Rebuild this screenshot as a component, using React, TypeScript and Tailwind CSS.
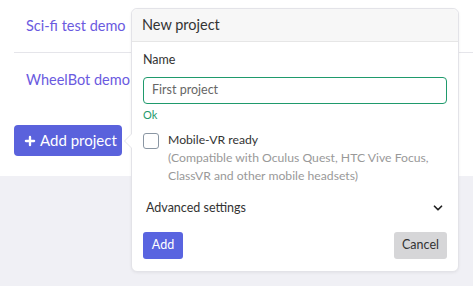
import { ChevronDown, Plus } from "lucide-react";

export default function App() {
  return (
    <div className="relative w-[473px] h-[286px] overflow-hidden bg-[#f0f0f5] font-['Lato',sans-serif]">
      {/* project list card */}
      <div className="bg-white h-[176px] pl-[14px]">
        <div className="h-[53px] flex items-center pl-[12px] border-b border-[#e5e5ea]">
          <a className="text-[14.5px] text-[#6a5ae0] leading-none whitespace-nowrap">Sci-fi test demo</a>
        </div>
        <div className="h-[55px] flex items-center pl-[12px]">
          <a className="text-[14.5px] text-[#6a5ae0] leading-none whitespace-nowrap">WheelBot demo</a>
        </div>
        <div className="pt-[17px]">
          <button className="h-[31px] w-[108px] flex items-center gap-[3px] px-[9px] rounded-[4px] bg-[#5a62dc] text-white text-[15px] whitespace-nowrap">
            <Plus className="w-[14px] h-[14px] shrink-0" strokeWidth={4} />
            Add project
          </button>
        </div>
      </div>

      {/* new project popover */}
      <div className="absolute left-[131px] top-[8px] w-[328px] h-[264px] bg-white border border-[#e3e3e8] rounded-[6px] shadow-[0_1px_3px_rgba(0,0,0,0.06)]">
        <div className="absolute -left-[8px] top-[124px] w-0 h-0 border-y-[8px] border-y-transparent border-r-[8px] border-r-[#e3e3e8]" />
        <div className="absolute -left-[7px] top-[124px] w-0 h-0 border-y-[8px] border-y-transparent border-r-[8px] border-r-white" />
        <div className="h-[33px] flex items-center px-[10px] bg-[#f7f7f7] border-b border-[#e6e6e6] rounded-t-[6px]">
          <span className="text-[14.5px] text-[#333]">New project</span>
        </div>
        <div className="px-[11px] pt-[9px]">
          <div className="text-[12.5px] text-[#333] leading-[18px]">Name</div>
          <div className="mt-[8px] h-[27px] border border-[#1f9a6c] rounded-[4px] flex items-center px-[8px] text-[12.5px] text-[#666]">
            First project
          </div>
          <div className="mt-[4px] text-[11px] text-[#1f9a6c] leading-[14px]">Ok</div>
          <div className="mt-[6px] flex gap-[9px]">
            <div className="w-[16px] h-[16px] mt-[5px] border border-[#8a96a3] rounded-[3px] shrink-0" />
            <div className="text-[12.2px] leading-[18px] whitespace-nowrap">
              <div className="text-[#333] pt-[3px]">Mobile-VR ready</div>
              <div className="text-[#999]">(Compatible with Oculus Quest, HTC Vive Focus,</div>
              <div className="text-[#999]">ClassVR and other mobile headsets)</div>
            </div>
          </div>
          <div className="mt-[13px] flex items-center justify-between pl-[3px] pr-[2px] h-[20px]">
            <span className="text-[12.5px] text-[#333]">Advanced settings</span>
            <ChevronDown className="w-[14px] h-[14px] text-[#222]" strokeWidth={3} />
          </div>
          <div className="mt-[14px] flex justify-between">
            <button className="h-[27px] w-[40px] rounded-[3px] bg-[#5964e0] text-white text-[12.5px]">Add</button>
            <button className="h-[27px] w-[53px] rounded-[3px] bg-[#d6d6d8] text-[#333] text-[12.5px]">Cancel</button>
          </div>
        </div>
      </div>
    </div>
  );
}
